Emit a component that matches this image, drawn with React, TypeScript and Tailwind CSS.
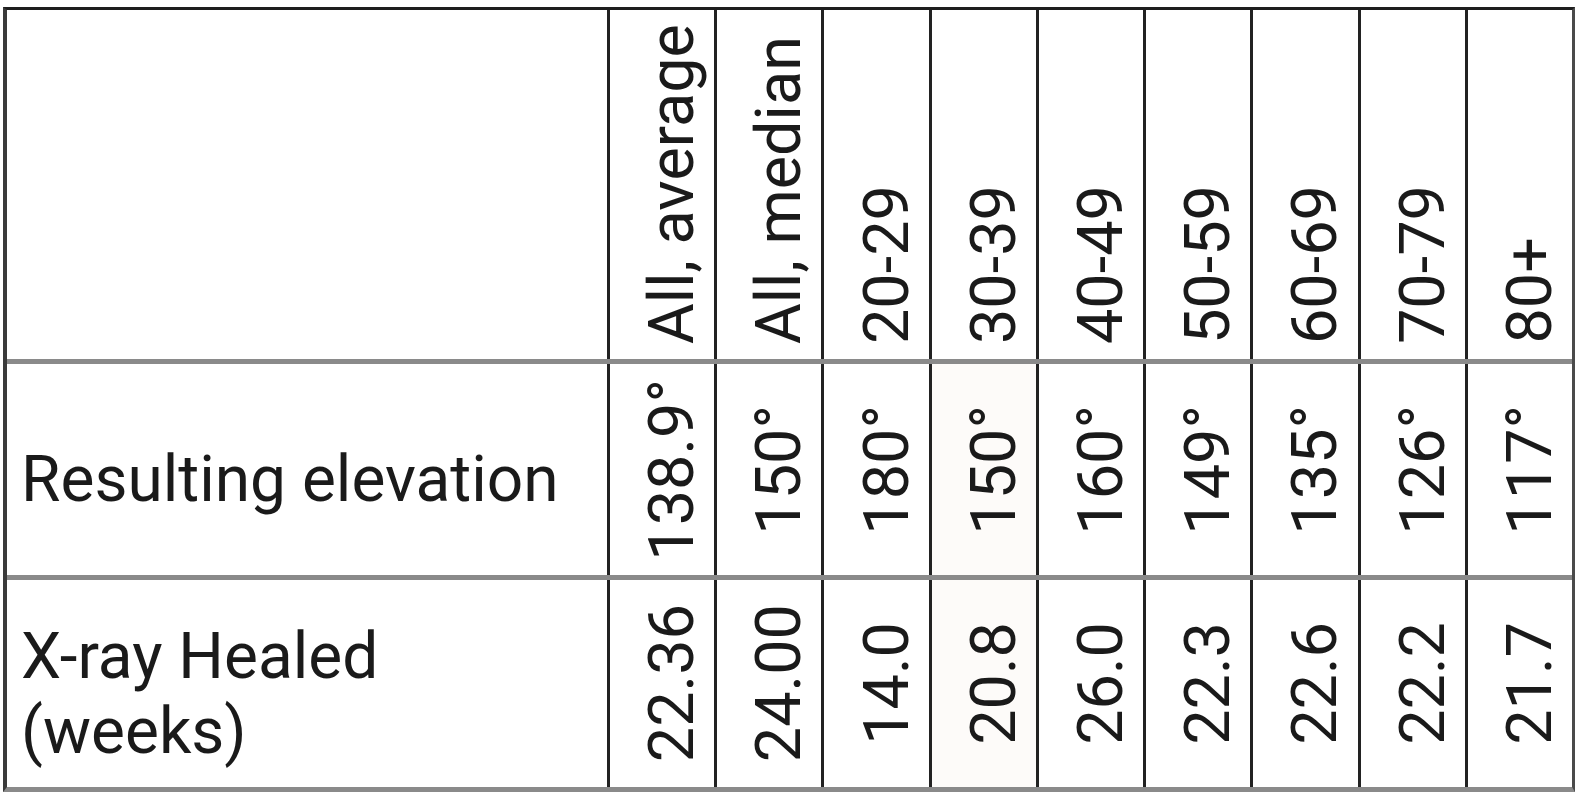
import React from "react";

const headers = ["All, average", "All, median", "20-29", "30-39", "40-49", "50-59", "60-69", "70-79", "80+"];
const elevation = ["138.9°", "150°", "180°", "150°", "160°", "149°", "135°", "126°", "117°"];
const healed = ["22.36", "24.00", "14.0", "20.8", "26.0", "22.3", "22.6", "22.2", "21.7"];

function VText({ children }: { children: React.ReactNode }) {
  return (
    <span className="ml-[20px] whitespace-nowrap text-[63px] leading-[74px] text-[#1a1a1a] [writing-mode:vertical-rl] rotate-180">
      {children}
    </span>
  );
}

export default function App() {
  return (
    <div className="min-h-[800px] w-[1584px] bg-white font-['Roboto','Liberation_Sans',sans-serif]">
      <div className="ml-[3px] pt-[7px]">
        <div className="flex w-[1572px] flex-col border-t-[3px] border-l-[4px] border-r-[3px] border-b-[5px] border-t-[#1e1e1e] border-l-[#3a3a3a] border-r-[#4a4a4a] border-b-[#8a8a8a]">
          {/* Header row */}
          <div className="flex h-[354px] border-b-[5px] border-b-[#8a8a8a]">
            <div className="w-[600px] shrink-0" />
            {headers.map((h) => (
              <div key={h} className="flex flex-1 items-end justify-center border-l-[3px] border-l-[#222] pb-[15px]">
                <VText>{h}</VText>
              </div>
            ))}
          </div>
          {/* Resulting elevation */}
          <div className="flex h-[216px] border-b-[5px] border-b-[#8a8a8a]">
            <div className="flex w-[600px] shrink-0 items-center pl-[14px] pt-[20px]">
              <span className="whitespace-nowrap text-[64px] leading-[75px] text-[#1a1a1a]">
                Resulting elevation
              </span>
            </div>
            {elevation.map((v, i) => (
              <div
                key={i}
                className={`flex flex-1 items-center justify-center border-l-[3px] border-l-[#222] ${i === 3 ? "bg-[#fdfbf9]" : ""}`}
              >
                <VText>{v}</VText>
              </div>
            ))}
          </div>
          {/* X-ray healed */}
          <div className="flex h-[207px]">
            <div className="flex w-[600px] shrink-0 items-center pl-[14px] pt-[20px]">
              <span className="text-[64px] leading-[75px] text-[#1a1a1a]">
                X-ray Healed
                <br />
                (weeks)
              </span>
            </div>
            {healed.map((v, i) => (
              <div
                key={i}
                className={`flex flex-1 items-center justify-center border-l-[3px] border-l-[#222] ${i === 3 ? "bg-[#fdfbf9]" : ""}`}
              >
                <VText>{v}</VText>
              </div>
            ))}
          </div>
        </div>
      </div>
    </div>
  );
}
